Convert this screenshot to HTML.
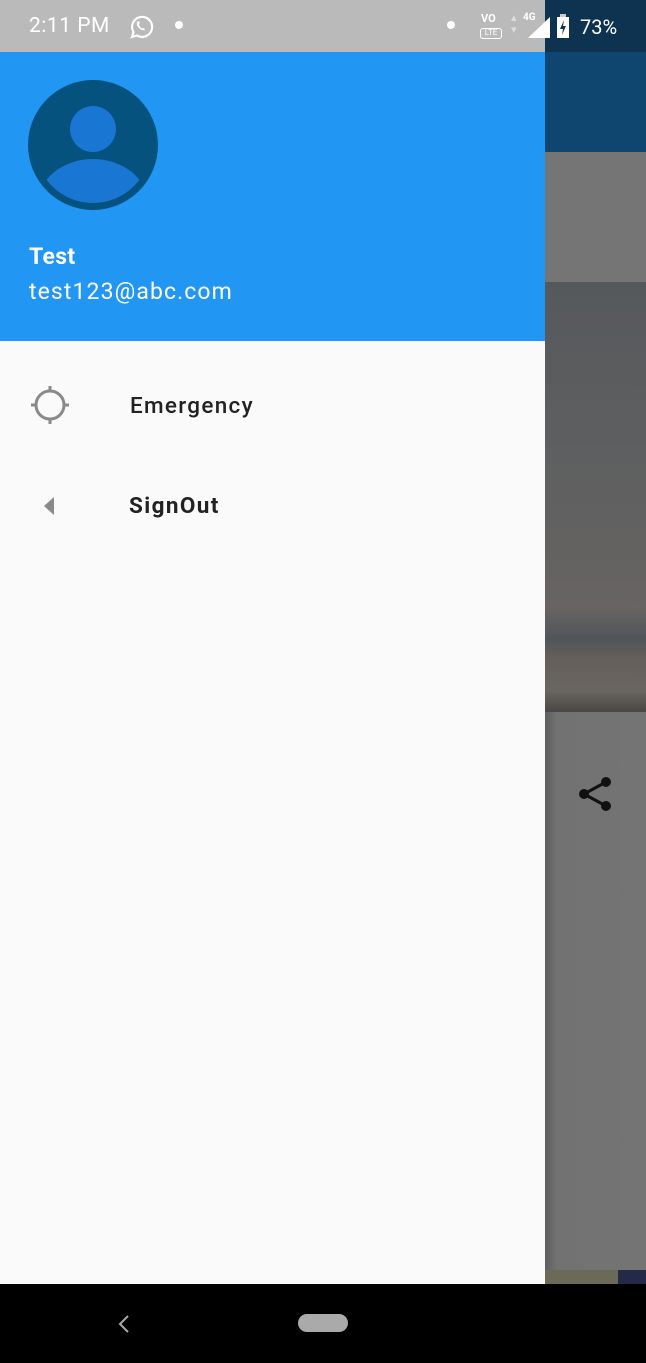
<!DOCTYPE html>
<html><head><meta charset="utf-8"><style>
*{margin:0;padding:0;box-sizing:border-box}
body{width:646px;height:1363px;position:relative;overflow:hidden;background:#747474;font-family:"Roboto","Liberation Sans",sans-serif}
.abs{position:absolute}
</style></head><body>
<!-- right background -->
<div class="abs" style="left:545px;top:0;width:101px;height:52px;background:#0d3350"></div>
<div class="abs" style="left:545px;top:52px;width:101px;height:100px;background:#0f4670"></div>
<div class="abs" style="left:545px;top:152px;width:101px;height:130px;background:#757575"></div>
<div class="abs" style="left:545px;top:282px;width:101px;height:430px;background:linear-gradient(#56595c 0%,#5e5f60 40%,#676462 76%,#50555a 83%,#635e59 87%,#6a6560 95%,#4a4744 100%)"></div>
<div class="abs" style="left:545px;top:712px;width:101px;height:558px;background:linear-gradient(90deg,#5e5e5e,#727272 12px,#747474)"></div>
<div class="abs" style="left:545px;top:1270px;width:73px;height:14px;background:#6b6957"></div>
<div class="abs" style="left:618px;top:1270px;width:28px;height:14px;background:#222a48"></div>
<svg class="abs" style="left:576px;top:774px" width="40" height="40" viewBox="0 0 40 40"><g fill="#111" stroke="#111" stroke-width="3"><line x1="8" y1="20" x2="30" y2="8"/><line x1="8" y1="20" x2="30" y2="32"/></g><circle cx="8" cy="20" r="5" fill="#111"/><circle cx="30" cy="8" r="5" fill="#111"/><circle cx="30" cy="32" r="5" fill="#111"/></svg>
<!-- status bar -->
<div class="abs" style="left:0;top:0;width:545px;height:52px;background:#bababa"></div>
<div class="abs" style="left:29px;top:14px;color:#fff;font-size:21px;letter-spacing:0.5px">2:11 PM</div>
<svg class="abs" style="left:127px;top:13px" width="28" height="28" viewBox="0 0 28 28"><path d="M5 24 L6.5 19 A10 10 0 1 1 10 22.5 Z" fill="none" stroke="#fff" stroke-width="2.2"/><path d="M10 9 Q9 12 12 15 Q15 18 18 17 L17 15 L15 15.5 Q12 13.5 12 11 L13 10 L12 8 Z" fill="#fff"/></svg>
<div class="abs" style="left:175px;top:21px;width:8px;height:8px;border-radius:50%;background:#fff"></div>
<div class="abs" style="left:447px;top:21px;width:8px;height:8px;border-radius:50%;background:#fff"></div>
<div class="abs" style="left:481px;top:12px;color:#fff;font-size:11px;font-weight:bold">VO</div>
<div class="abs" style="left:480px;top:28px;width:22px;height:11px;border:1.5px solid #fff;border-radius:3px;color:#fff;font-size:8px;line-height:8px;text-align:center">LTE</div>
<div class="abs" style="left:511px;top:12px;color:#ddd;font-size:11px;line-height:12px">▴<br>▾</div>
<div class="abs" style="left:523px;top:12px;color:#fff;font-size:10px;font-weight:bold">4G</div>
<svg class="abs" style="left:528px;top:17px" width="22" height="21"><polygon points="22,0 22,21 0,21" fill="#fff"/></svg>
<svg class="abs" style="left:556px;top:14px" width="14" height="24"><rect x="4" y="0" width="6" height="3" fill="#ccc"/><rect x="1" y="3" width="12" height="21" fill="#fff"/><polygon points="8,6 4,15 7,15 6,21 10,12 7,12" fill="#0d3350"/></svg>
<div class="abs" style="left:580px;top:15px;color:#fff;font-size:20px">73%</div>
<!-- drawer -->
<div class="abs" style="left:0;top:52px;width:545px;height:289px;background:#2196f3"></div>
<svg class="abs" style="left:28px;top:80px" width="130" height="130" viewBox="0 0 130 130"><defs><clipPath id="c"><circle cx="65" cy="65" r="58"/></clipPath></defs><circle cx="65" cy="65" r="65" fill="#06527f"/><circle cx="65" cy="49" r="23" fill="#1976d2"/><g clip-path="url(#c)"><ellipse cx="65" cy="126" rx="56" ry="47" fill="#1976d2"/></g></svg>
<div class="abs" style="left:29px;top:243px;color:#fff;font-size:23px;font-weight:bold;letter-spacing:0.3px">Test</div>
<div class="abs" style="left:29px;top:278px;color:#fff;font-size:23px;letter-spacing:1.1px">test123@abc.com</div>
<div class="abs" style="left:0;top:341px;width:545px;height:943px;background:#fafafa"></div>
<svg class="abs" style="left:30px;top:385px" width="40" height="40" viewBox="0 0 40 40"><circle cx="20" cy="20" r="14" fill="none" stroke="#8a8a8a" stroke-width="3"/><g stroke="#8a8a8a" stroke-width="3"><line x1="20" y1="1" x2="20" y2="7"/><line x1="20" y1="33" x2="20" y2="39"/><line x1="1" y1="20" x2="7" y2="20"/><line x1="33" y1="20" x2="39" y2="20"/></g></svg>
<div class="abs" style="left:130px;top:393px;color:#222;font-size:22.5px;font-weight:500;letter-spacing:1.3px">Emergency</div>
<svg class="abs" style="left:44px;top:497px" width="10" height="18"><polygon points="10,0 10,18 0,9" fill="#8a8a8a"/></svg>
<div class="abs" style="left:129px;top:493px;color:#222;font-size:22.5px;font-weight:bold;letter-spacing:1.4px">SignOut</div>
<!-- nav bar -->
<div class="abs" style="left:0;top:1284px;width:646px;height:79px;background:#000"></div>
<svg class="abs" style="left:117px;top:1314px" width="14" height="20"><polyline points="11,2 3,10 11,18" fill="none" stroke="#aaa" stroke-width="2"/></svg>
<div class="abs" style="left:298px;top:1314px;width:50px;height:18px;border-radius:9px;background:#aaa"></div>
</body></html>
